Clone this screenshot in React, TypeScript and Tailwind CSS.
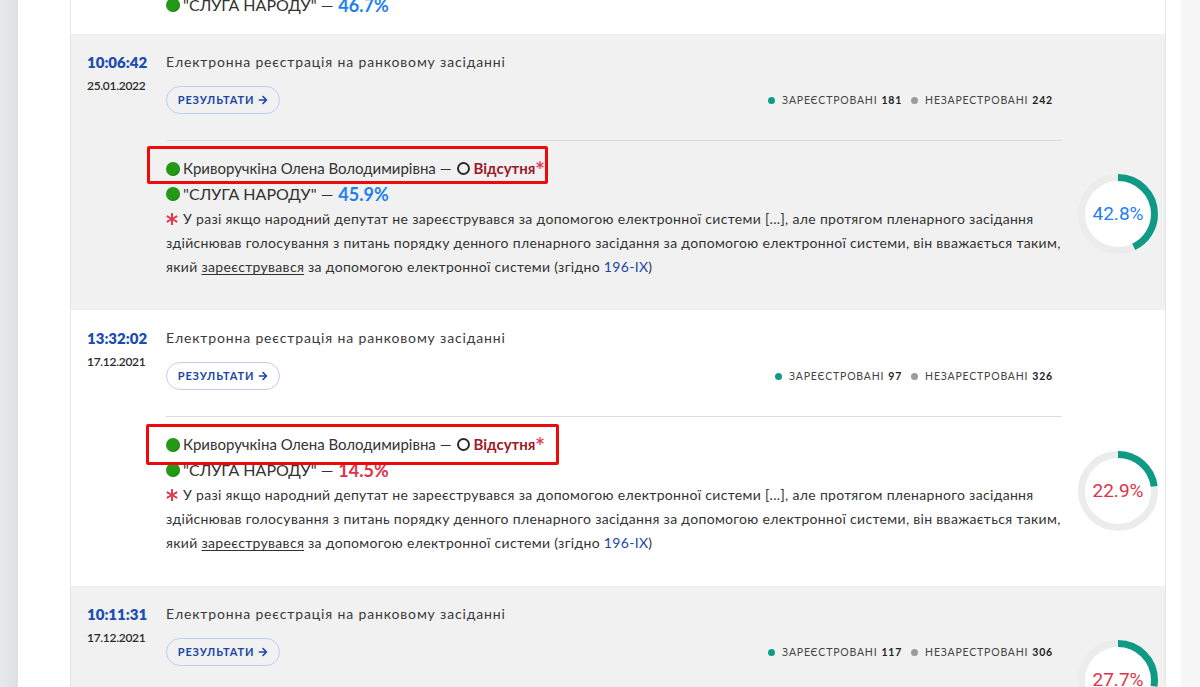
import React from "react";
import { FaArrowRight, FaAsterisk } from "react-icons/fa";

const FONT = { fontFamily: "Lato, 'Noto Sans', sans-serif" };

function Dot() {
  return <span className="inline-block w-[14px] h-[14px] rounded-full bg-[#229a16] shadow-[inset_-1px_-1px_0_rgba(0,0,0,0.15)] mr-[3px] shrink-0" />;
}

function Party({ pct, color }: { pct: string; color: string }) {
  return (
    <div className="flex items-center leading-[26px] h-[26px] text-[16px] text-[#333]">
      <Dot />
      <span>"СЛУГА НАРОДУ" — </span>
      <span className={`ml-[5px] font-bold text-[18px] ${color}`}>{pct}</span>
    </div>
  );
}

function Ring({ p, text, color }: { p: number; text: string; color: string }) {
  const r = 36.5;
  const c = 2 * Math.PI * r;
  return (
    <div className="relative w-[80px] h-[80px]">
      <svg width="80" height="80" viewBox="0 0 80 80">
        <circle cx="40" cy="40" r={r} fill="#ffffff" stroke="#ececec" strokeWidth="7" />
        <circle
          cx="40"
          cy="40"
          r={r}
          fill="none"
          stroke="#0f9a86"
          strokeWidth="7"
          strokeDasharray={`${p * c} ${c}`}
          transform="rotate(-90 40 40)"
        />
      </svg>
      <div
        className={`absolute inset-0 flex items-center justify-center text-[19px] ${color}`}
        style={{ fontFamily: "Roboto, sans-serif" }}
      >
        {text}
      </div>
    </div>
  );
}

type RowProps = {
  bg: string;
  time: string;
  date: string;
  reg: number;
  unreg: number;
  pct: string;
  pctColor: string;
  ring: number;
  ringText: string;
  ringColor: string;
  ringTop: string;
  box: { top: string; left: string; w: string; h: string };
};

function TimeCol({ time, date }: { time: string; date: string }) {
  return (
    <div className="w-[79px] shrink-0">
      <div className="leading-6 text-[15px] font-extrabold text-[#1c4db0]">{time}</div>
      <div className="leading-6 text-[12px] font-semibold text-[#2b2b2b] tracking-[-0.3px]">{date}</div>
    </div>
  );
}

function TopBlock({ reg, unreg }: { reg: number; unreg: number }) {
  return (
    <>
      <div className="leading-6 text-[14px] text-[#3a3a3a] tracking-[0.85px]">
        Електронна реєстрація на ранковому засіданні
      </div>
      <div className="mt-3 flex items-center justify-between pr-[9px]">
        <button className="h-[28px] w-[114px] rounded-full border border-[#bccfee] flex items-center justify-center gap-[4px] text-[11px] font-bold tracking-[0.9px] text-[#1a47a6]">
          РЕЗУЛЬТАТИ <FaArrowRight className="w-[10px] h-[10px]" />
        </button>
        <div className="flex items-center text-[10.5px] tracking-[0.8px] text-[#444] mt-[1px]">
          <span className="w-[7px] h-[7px] rounded-full bg-[#119a86] mr-[7px]" />
          ЗАРЕЄСТРОВАНІ <b className="ml-[4px] text-[#222]">{reg}</b>
          <span className="w-[7px] h-[7px] rounded-full bg-[#9c9c9c] ml-[9px] mr-[7px]" />
          НЕЗАРЕСТРОВАНІ <b className="ml-[4px] text-[#222]">{unreg}</b>
        </div>
      </div>
    </>
  );
}

function Row(props: RowProps) {
  return (
    <div className={`flex h-[276px] shrink-0 pl-[16px] pr-[6px] pt-[16px] ${props.bg}`}>
      <TimeCol time={props.time} date={props.date} />
      <div className="w-[896px] shrink-0">
        <TopBlock reg={props.reg} unreg={props.unreg} />
        <div className="mt-[26px] border-t border-[#dcdcdc]" />
        <div className="relative mt-[15px] flex items-center leading-[25px] h-[25px] text-[15px] text-[#333]">
          <div
            className={`absolute border-[3px] border-[#ee0a0a] rounded-[2px] ${props.box.top} ${props.box.left} ${props.box.w} ${props.box.h}`}
          />
          <Dot />
          <span>Криворучкіна Олена Володимирівна — </span>
          <span className="ml-[5px] inline-block w-[13px] h-[13px] rounded-full border-[2.5px] border-[#2b2b2b]" />
          <span className="ml-[4px] font-bold text-[#9b1b2a]">Відсутня</span>
          <FaAsterisk className="w-[8px] h-[8px] text-[#e3374c] mb-[8px] ml-[1px]" />
        </div>
        <Party pct={props.pct} color={props.pctColor} />
        <div className="text-[14px] leading-6 text-[#333] tracking-[0.32px] whitespace-nowrap">
          <FaAsterisk className="inline w-[12px] h-[12px] text-[#e3374c] mr-[5px] -mt-[3px]" />
          У разі якщо народний депутат не зареєструвався за допомогою електронної системи [...], але протягом пленарного засідання
          <br />
          здійснював голосування з питань порядку денного пленарного засідання за допомогою електронної системи, він вважається таким,
          <br />
          який <span className="underline underline-offset-2">зареєструвався</span> за допомогою електронної системи (згідно{" "}
          <span className="text-[#1a47a6]">196-IX</span>)
        </div>
      </div>
      <div className={`ml-[16px] ${props.ringTop}`}>
        <Ring p={props.ring} text={props.ringText} color={props.ringColor} />
      </div>
    </div>
  );
}

function ShortRow() {
  return (
    <div className="flex h-[200px] shrink-0 pl-[16px] pr-[6px] pt-[16px] bg-[#f1f1f1]">
      <TimeCol time="10:11:31" date="17.12.2021" />
      <div className="w-[896px] shrink-0">
        <TopBlock reg={117} unreg={306} />
      </div>
      <div className="ml-[16px] mt-[38px]">
        <Ring p={0.277} text="27.7%" color="text-[#e0334a]" />
      </div>
    </div>
  );
}

export default function App() {
  return (
    <div className="flex h-[687px] w-[1200px] overflow-hidden bg-white" style={FONT}>
      <div className="w-[18px] shrink-0 bg-gradient-to-r from-[#e7eaec] to-[#dde1e4]" />
      <div className="w-[52px] shrink-0 bg-white" />
      <div className="w-[1096px] shrink-0 border-x border-[#e6e6e6] flex flex-col overflow-hidden">
        <div className="h-[34px] shrink-0 bg-white overflow-hidden pl-[95px]">
          <div className="-mt-[8px]">
            <Party pct="46.7%" color="text-[#1e7ff0]" />
          </div>
        </div>
        <Row
          bg="bg-[#f1f1f1]"
          time="10:06:42"
          date="25.01.2022"
          reg={181}
          unreg={242}
          pct="45.9%"
          pctColor="text-[#1e7ff0]"
          ring={0.428}
          ringText="42.8%"
          ringColor="text-[#1e7ff0]"
          ringTop="mt-[124px]"
          box={{ top: "-top-[10px]", left: "-left-[19px]", w: "w-[401px]", h: "h-[38px]" }}
        />
        <Row
          bg="bg-white"
          time="13:32:02"
          date="17.12.2021"
          reg={97}
          unreg={326}
          pct="14.5%"
          pctColor="text-[#e0334a]"
          ring={0.229}
          ringText="22.9%"
          ringColor="text-[#e0334a]"
          ringTop="mt-[125px]"
          box={{ top: "-top-[8px]", left: "-left-[20px]", w: "w-[413px]", h: "h-[41px]" }}
        />
        <ShortRow />
      </div>
      <div className="w-[15px] shrink-0 bg-white" />
      <div className="w-[19px] shrink-0 bg-[#f7f7f7]" />
    </div>
  );
}
